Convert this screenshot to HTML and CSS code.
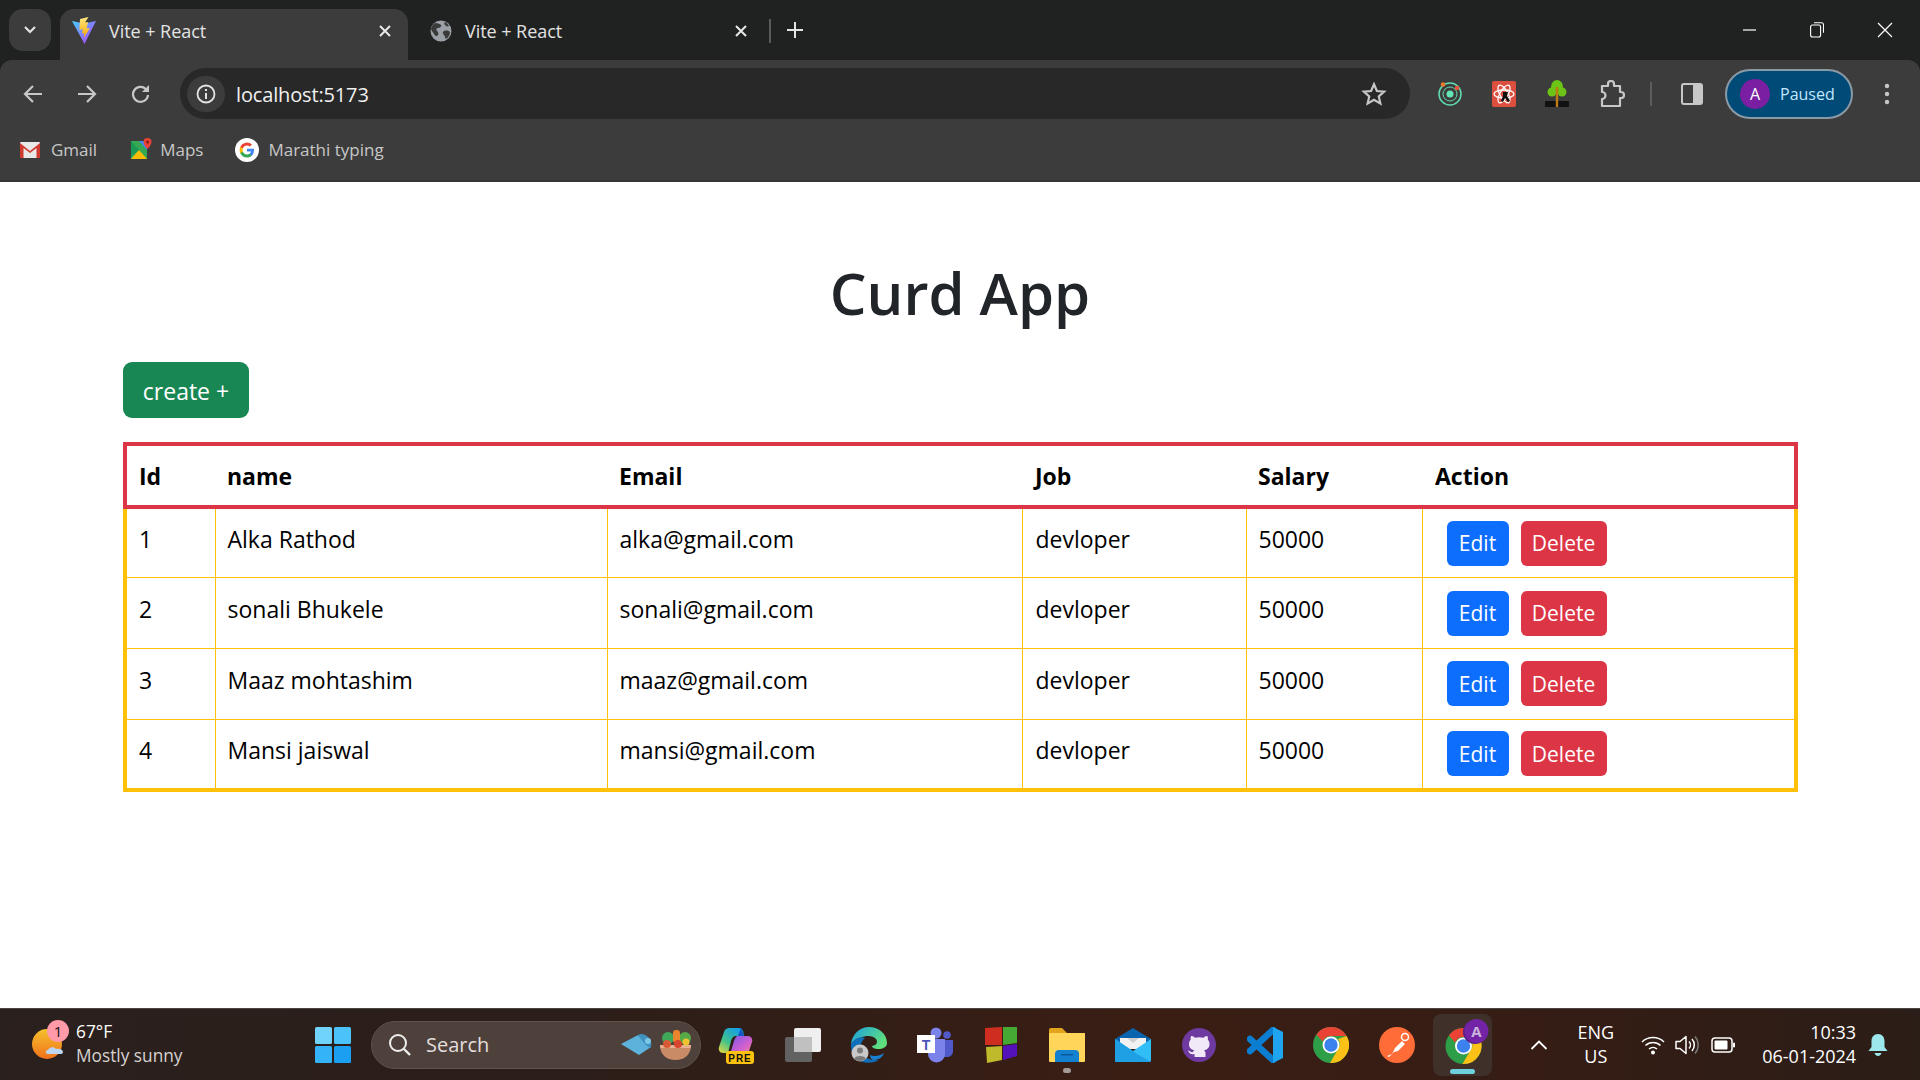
FILE: index.html
```html
<!DOCTYPE html>
<html lang="en">
<head>
<meta charset="utf-8">
<title>Vite + React</title>
<link rel="stylesheet" href="styles.css">
</head>
<body>
<header class="browser">
  <div class="tabstrip">
    <div class="tabsearch"><svg width="14" height="10" viewBox="0 0 14 10"><path d="M2 2l5 5 5-5" fill="none" stroke="#e3e3e3" stroke-width="2.2"/></svg></div>
    <div class="tab active">
      <svg class="favicon" width="24" height="28" viewBox="0 0 24 28"><defs><linearGradient id="vp" x1="0" y1="0" x2="1" y2="1"><stop offset="0" stop-color="#41d1ff"/><stop offset="1" stop-color="#bd34fe"/></linearGradient><linearGradient id="vy" x1="0" y1="0" x2="0" y2="1"><stop offset="0" stop-color="#ffea83"/><stop offset="1" stop-color="#ffa800"/></linearGradient></defs><path d="M0 4l12 2.500L24 4 12.500 27z" fill="url(#vp)"/><path d="M16.500 0L8 2l-.6 11 3.400-.8-.8 4.300 2.400-.6-.7 5L18 11l-3.400.6L16 5l-3 .6z" fill="url(#vy)"/></svg>
      <span class="tabtitle">Vite + React</span>
      <svg class="tabx" width="14" height="14" viewBox="0 0 14 14"><path d="M2 2l10 10M12 2L2 12" stroke="#e8e8e8" stroke-width="2"/></svg>
    </div>
    <div class="tab">
      <svg class="favicon" width="22" height="22" viewBox="0 0 22 22"><circle cx="11" cy="11" r="10.500" fill="#9aa0a6"/><path d="M5 3c3 0 5 1 6 2s-1 3-3 3-2 2-1 3 2 2 1 4-3 1-4-1-3-4-3-5 2-5 4-6zM14 11c3-1 5 0 6 1 0 3-2 6-4 7-1-1-1-3-2-4s-2-3 0-4zM15 2c2 1 3 2 4 4-2 1-3 0-4-1s-1-2 0-3z" fill="#3a3a3a"/></svg>
      <span class="tabtitle">Vite + React</span>
      <svg class="tabx" width="14" height="14" viewBox="0 0 14 14"><path d="M2 2l10 10M12 2L2 12" stroke="#e8e8e8" stroke-width="2"/></svg>
    </div>
    <span class="tabdivider"></span>
    <svg class="newtab" width="18" height="18" viewBox="0 0 18 18"><path d="M9 1v16M1 9h16" stroke="#e3e3e3" stroke-width="2"/></svg>
    <div class="winctrls">
      <svg width="14" height="14" viewBox="0 0 14 14"><path d="M0 7h13" stroke="#fff" stroke-width="1.200"/></svg>
      <svg width="14" height="16" viewBox="0 0 14 16"><rect x=".6" y="3" width="10" height="12" rx="2" fill="none" stroke="#fff" stroke-width="1.100"/><path d="M4 .8h7.500q2 0 2 2v8" fill="none" stroke="#fff" stroke-width="1.100"/></svg>
      <svg width="16" height="16" viewBox="0 0 16 16"><path d="M1 1l14 14M15 1L1 15" stroke="#fff" stroke-width="1.200"/></svg>
    </div>
  </div>
  <div class="toolbar">
    <div class="navs">
      <svg width="22" height="20" viewBox="0 0 22 20"><path d="M20 10H3M11 2l-8 8 8 8" fill="none" stroke="#c7c7c7" stroke-width="2.200"/></svg>
      <svg width="22" height="20" viewBox="0 0 22 20"><path d="M2 10h17M11 2l8 8-8 8" fill="none" stroke="#c7c7c7" stroke-width="2.200"/></svg>
      <svg class="reload" width="20" height="20" viewBox="0 0 20 20"><path d="M17 11a7.500 7.500 0 1 1-2.200-6" fill="none" stroke="#c7c7c7" stroke-width="2.200"/><path d="M18 1v7h-7z" fill="#c7c7c7"/></svg>
    </div>
    <div class="omnibox">
      <span class="siteinfo"><svg width="20" height="20" viewBox="0 0 20 20"><circle cx="10" cy="10" r="8.500" fill="none" stroke="#e3e3e3" stroke-width="1.800"/><path d="M10 9v6M10 5v2" stroke="#e3e3e3" stroke-width="2"/></svg></span>
      <span class="url">localhost:5173</span>
      <svg class="star" width="26" height="26" viewBox="0 0 24 24"><path d="M12 3l2.700 6.200 6.700.6-5 4.500 1.500 6.600L12 17.400l-5.900 3.500 1.500-6.600-5-4.500 6.700-.6z" fill="none" stroke="#c7c7c7" stroke-width="2"/></svg>
    </div>
    <div class="exts">
      <svg width="26" height="26" viewBox="0 0 26 26"><circle cx="13" cy="13" r="11" fill="none" stroke="#5fdcae" stroke-width="1.500"/><circle cx="13" cy="13" r="7" fill="none" stroke="#5fdcae" stroke-width="1"/><circle cx="13" cy="13" r="3.500" fill="#62e6b4"/><circle cx="6" cy="3.500" r="2.300" fill="#e8792f"/><circle cx="20" cy="7" r="2.300" fill="#e5533a"/></svg>
      <svg width="24" height="26" viewBox="0 0 24 26"><rect width="24" height="26" rx="2" fill="#dc4f3e"/><g fill="none" stroke="#fff" stroke-width="1.300"><ellipse cx="12" cy="13" rx="10" ry="4"/><ellipse cx="12" cy="13" rx="10" ry="4" transform="rotate(60 12 13)"/><ellipse cx="12" cy="13" rx="10" ry="4" transform="rotate(120 12 13)"/></g><path d="M11 11h5l-1 4 3 5-2 1-3-4-2 4-2-1 2-5z" fill="#111"/></svg>
      <svg width="24" height="30" viewBox="0 0 24 30"><ellipse cx="12" cy="8" rx="6" ry="7" fill="#6cc516"/><circle cx="7" cy="13" r="4.500" fill="#6cc516"/><circle cx="17" cy="13" r="4.500" fill="#6cc516"/><rect x="10.800" y="8" width="2.400" height="18" fill="#c07b12"/><rect y="22" width="24" height="6" fill="#111"/><rect x="10.800" y="22" width="2.400" height="6" fill="#c07b12"/></svg>
      <svg class="puzzle" width="26" height="28" viewBox="0 0 26 28"><path d="M3 6h6V4a3 3 0 0 1 6 0v2h6v6h1a3 3 0 0 1 0 6h-1v8H3v-7a3 3 0 0 0 0-7z" fill="none" stroke="#c7c7c7" stroke-width="2.200" stroke-linejoin="round"/></svg>
    </div>
    <span class="tooldivider"></span>
    <svg class="sidepanel" width="22" height="22" viewBox="0 0 22 22"><rect x="1" y="1" width="20" height="20" rx="2" fill="none" stroke="#c7c7c7" stroke-width="2"/><rect x="12" y="1" width="9" height="20" rx="1" fill="#c7c7c7"/></svg>
    <div class="profile"><span class="avatar">A</span><span class="paused">Paused</span></div>
    <svg class="kebab" width="6" height="22" viewBox="0 0 6 22"><circle cx="3" cy="3" r="2.200" fill="#c7c7c7"/><circle cx="3" cy="11" r="2.200" fill="#c7c7c7"/><circle cx="3" cy="19" r="2.200" fill="#c7c7c7"/></svg>
  </div>
  <div class="bookmarks">
    <span class="bm bm-gmail"><svg width="22" height="18" viewBox="0 0 22 18"><rect x="1" y="1" width="20" height="16" rx="1" fill="#e8e8e8"/><path d="M1 17V2l10 8 10-8v15h-3.500V7L11 12 4.500 7v10z" fill="#d0392e"/></svg>Gmail</span>
    <span class="bm bm-maps"><svg width="22" height="24" viewBox="0 0 22 24"><path d="M1 3h16v18H1z" fill="#34a853"/><path d="M1 21l8-9 8 9z" fill="#fbbc04"/><path d="M9 3h8v9z" fill="#4285f4"/><path d="M1 3l8 9-8 6z" fill="#1a9a55"/><path d="M17.500 0a4 4 0 0 1 4 4c0 3-4 7-4 7s-4-4-4-7a4 4 0 0 1 4-4z" fill="#ea4335"/><circle cx="17.500" cy="4" r="1.500" fill="#7d1d16"/></svg>Maps</span>
    <span class="bm bm-g"><svg width="24" height="24" viewBox="0 0 24 24"><circle cx="12" cy="12" r="12" fill="#fff"/><path d="M19 12.300c0-.6 0-1-.1-1.500H12v2.800h4a3.400 3.400 0 0 1-1.500 2.200v1.900h2.400c1.400-1.300 2.100-3.200 2.100-5.400z" fill="#4285f4"/><path d="M12 19.500c2 0 3.700-.7 4.900-1.800l-2.400-1.900c-.7.500-1.500.7-2.500.7-1.900 0-3.600-1.300-4.200-3.100H5.300v1.900a7.500 7.500 0 0 0 6.700 4.200z" fill="#34a853"/><path d="M7.800 13.400a4.500 4.500 0 0 1 0-2.800V8.700H5.300a7.500 7.500 0 0 0 0 6.600z" fill="#fbbc05"/><path d="M12 7.500c1.100 0 2.100.4 2.900 1.100L17 6.500A7.500 7.500 0 0 0 5.300 8.700l2.500 1.900C8.400 8.800 10.100 7.500 12 7.500z" fill="#ea4335"/></svg>Marathi typing</span>
  </div>
</header>

<main class="page">
  <h1 class="title">Curd App</h1>
  <div class="create-row"><button class="btn btn-create">create +</button></div>
  <table class="crud">
    <colgroup><col class="c-id"><col class="c-name"><col class="c-email"><col class="c-job"><col class="c-salary"><col class="c-action"></colgroup>
    <thead><tr><th>Id</th><th>name</th><th>Email</th><th>Job</th><th>Salary</th><th>Action</th></tr></thead>
    <tbody>
      <tr><td>1</td><td>Alka Rathod</td><td>alka@gmail.com</td><td>devloper</td><td>50000</td><td class="actions"><button class="btn btn-edit">Edit</button><button class="btn btn-delete">Delete</button></td></tr>
      <tr><td>2</td><td>sonali Bhukele</td><td>sonali@gmail.com</td><td>devloper</td><td>50000</td><td class="actions"><button class="btn btn-edit">Edit</button><button class="btn btn-delete">Delete</button></td></tr>
      <tr><td>3</td><td>Maaz mohtashim</td><td>maaz@gmail.com</td><td>devloper</td><td>50000</td><td class="actions"><button class="btn btn-edit">Edit</button><button class="btn btn-delete">Delete</button></td></tr>
      <tr><td>4</td><td>Mansi jaiswal</td><td>mansi@gmail.com</td><td>devloper</td><td>50000</td><td class="actions"><button class="btn btn-edit">Edit</button><button class="btn btn-delete">Delete</button></td></tr>
    </tbody>
  </table>
</main>

<footer class="taskbar">
  <div class="weather">
    <span class="wicon"><svg width="38" height="40" viewBox="0 0 38 40"><defs><linearGradient id="sun" x1="0" y1="0" x2="0" y2="1"><stop offset="0" stop-color="#f5c22e"/><stop offset="1" stop-color="#f0701a"/></linearGradient></defs><circle cx="18" cy="19" r="15" fill="url(#sun)"/><path d="M19 29c-3 0-3-4 0-4 1-3 6-4 8-1 4-1 7 1 7 3s-2 2-3 2z" fill="#bcd6f2"/></svg><span class="wbadge">1</span></span>
    <span class="wtext"><span class="wtemp">67°F</span><span class="wdesc">Mostly sunny</span></span>
  </div>
  <svg class="winlogo" width="36" height="36" viewBox="0 0 36 36"><rect width="17" height="17" rx="1.500" fill="#6fd3fb"/><rect x="19" width="17" height="17" rx="1.500" fill="#4cc2fa"/><rect y="19" width="17" height="17" rx="1.500" fill="#35b3f8"/><rect x="19" y="19" width="17" height="17" rx="1.500" fill="#1b9ff0"/></svg>
  <div class="search">
    <svg width="24" height="24" viewBox="0 0 24 24"><circle cx="10" cy="10" r="8" fill="none" stroke="#efefef" stroke-width="2"/><path d="M16 16l6 6" stroke="#efefef" stroke-width="2.400"/></svg>
    <span class="searchtext">Search</span>
    <svg class="searchart" width="72" height="32" viewBox="0 0 72 32"><path d="M0 15l17-9 13 12-12 8z" fill="#5db2dc"/><path d="M17 6c3-2 7-1 10 2 3 3 4 6 3 10-1 1-3 0-5-2-3-3-6-7-8-10z" fill="#3f92bf"/><circle cx="27" cy="12" r="3" fill="#7cc7e6"/><path d="M39 16h31c0 9-6 15-15.500 15S39 25 39 16z" fill="#c98a66"/><path d="M39 16h31l-.5 3h-30z" fill="#e9b08f"/><circle cx="47" cy="9" r="6" fill="#3fa65a"/><circle cx="64" cy="9" r="6" fill="#58a947"/><rect x="52" y="1" width="7" height="13" rx="3" fill="#e8852d"/><circle cx="46" cy="15" r="4" fill="#d85a35"/><circle cx="57" cy="15" r="4" fill="#d8452f"/><circle cx="65" cy="13" r="3.500" fill="#f2c230"/></svg>
  </div>
  <div class="tray-apps">
    <span class="app"><svg width="38" height="40" viewBox="0 0 38 40"><defs><linearGradient id="cp1" x1="0" y1="1" x2=".7" y2="0"><stop offset="0" stop-color="#f0d83c"/><stop offset=".45" stop-color="#41c28b"/><stop offset="1" stop-color="#159fe6"/></linearGradient><linearGradient id="cp2" x1="0" y1="0" x2="1" y2="1"><stop offset="0" stop-color="#7c5be6"/><stop offset=".6" stop-color="#d25fd0"/><stop offset="1" stop-color="#f08a8a"/></linearGradient></defs><path d="M11 3h10c2 0 3 1 4 3l1 5h-8c-3 0-4 2-5 5l-3 12H5c-3 0-5-3-4-6l5-15c1-3 3-4 5-4z" fill="url(#cp1)"/><path d="M20 11h10c3 0 5 3 4 6l-3 9c-1 2-2 3-4 3H17c-2 0-4-1-4-3l3-10c1-3 2-5 4-5z" fill="url(#cp2)"/><path d="M23 3l3 8h-6z" fill="#1257c4"/><rect x="8" y="26" width="28" height="13" rx="3" fill="#ffc20e"/><text x="22" y="36.500" class="pre">PRE</text></svg></span>
    <span class="app"><svg width="36" height="34" viewBox="0 0 36 34"><rect x="9" y="0" width="27" height="24" rx="2" fill="#efefef"/><rect y="9" width="27" height="25" rx="2" fill="#626262"/><rect x="9" y="9" width="18" height="15" fill="#c0c0c0"/></svg></span>
    <span class="app"><svg width="36" height="36" viewBox="0 0 36 36"><defs><linearGradient id="eg" x1="0" y1="0" x2="1" y2=".5"><stop offset="0" stop-color="#1b9de2"/><stop offset="1" stop-color="#5fe07d"/></linearGradient></defs><path d="M18 0c10 0 18 7 18 16 0 4-4 6-9 6-3 0-6-1-6-3 5-1 6-4 4-7-4-5-16-4-25 5C1 7 9 0 18 0z" fill="url(#eg)"/><path d="M0 17c3-5 9-8 14-6-4 3-6 9-3 15 2 5 9 8 17 7-10 6-29 3-28-16z" fill="#0f6fbb"/><path d="M19 28c4 2 10 1 14-2-2 5-6 7-10 7-2 0-4-2-4-5z" fill="#1a7fd0"/><circle cx="9" cy="26" r="8.500" fill="#c8c8c8"/><circle cx="9" cy="23.500" r="3" fill="#7a7a7a"/><path d="M3 32c1-4 11-4 12 0-3 2.500-9 2.500-12 0z" fill="#7a7a7a"/></svg></span>
    <span class="app"><svg width="36" height="36" viewBox="0 0 36 36"><circle cx="19" cy="6" r="5.500" fill="#7b83eb"/><circle cx="30" cy="8" r="3.800" fill="#5059c9"/><path d="M26 13h10v11c0 4-3 6-6 6h-4z" fill="#5059c9"/><path d="M11 12h17v15a8.500 8.500 0 0 1-17 0z" fill="#7b83eb"/><rect y="8" width="18" height="18" fill="#fff"/><text x="9" y="23" class="teamsT">T</text></svg></span>
    <span class="app"><svg width="34" height="36" viewBox="0 0 34 36"><path d="M1 1l17-1v18H1z" fill="#cf2d20"/><path d="M19 0l14 0v16l-14 2z" fill="#46a934"/><path d="M2 20l16-1v14L3 36z" fill="#bfb92c"/><path d="M19 19l14-2v12l-14 4z" fill="#5412ba"/></svg></span>
    <span class="app app-files"><svg width="36" height="34" viewBox="0 0 36 34"><path d="M0 2q0-2 2-2h11l5 5h18v6H0z" fill="#e3a31a"/><rect y="5" width="36" height="29" rx="1" fill="#ffd55a"/><path d="M6 34v-8q0-4 4-4h16q4 0 4 4v8z" fill="#1380d0"/><rect x="12" y="26" width="12" height="1.500" fill="#0a5b9b"/></svg><span class="dot"></span></span>
    <span class="app"><svg width="36" height="34" viewBox="0 0 36 34"><path d="M0 11L18 0l18 11v5H0z" fill="#0a63ad"/><path d="M5 10h26v11H5z" fill="#f2f2f2"/><path d="M12 10h12l-6 5z" fill="#cfcfcf"/><path d="M0 11l18 12 18-12v21q0 2-2 2H2q-2 0-2-2z" fill="#31bdf5"/><path d="M0 34V11l22 15 14 8z" fill="#1f9fe4"/></svg></span>
    <span class="app"><svg width="34" height="34" viewBox="0 0 34 34"><circle cx="17" cy="17" r="17" fill="#6f3a9f"/><path d="M12.500 29v-3c-4.500 1-5.500-1.500-6.500-3.500 1.500 0 2.500 1.700 4.500 1.800.4-.8 1-1.400 2-2-4-.8-5.500-3-5.500-6.300 0-2 .7-3.200 1.700-4.300-.3-1.300 0-2.800.5-3.700 2 0 3 1 3.800 1.800 2.700-.7 5.800-.7 8.500 0 .8-.8 1.800-1.800 3.800-1.800.5 .9.8 2.400.5 3.700 1 1.100 1.700 2.300 1.700 4.300 0 3.300-1.500 5.500-5.500 6.300 1 .8 1.500 2 1.500 3.200V29z" fill="#f1e9f7"/></svg></span>
    <span class="app"><svg width="36" height="36" viewBox="0 0 36 36"><path d="M26 3L3 24M26 33L3 12" stroke="#0c7ed1" stroke-width="6.500" stroke-linecap="round" fill="none"/><path d="M26 0l10 5v26l-10 5z" fill="#1fa4f0"/></svg></span>
    <span class="app"><svg width="36" height="36" viewBox="0 0 36 36"><circle cx="18" cy="18" r="18" fill="#2f9e48"/><path d="M18 0a18 18 0 0 1 15.600 9H18a9 9 0 0 0-8.300 5.500L3.400 7.400A18 18 0 0 1 18 0z" fill="#ea4335"/><path d="M33.600 9A18 18 0 0 1 17 36l7.500-13A9 9 0 0 0 25 12z" fill="#fbc116"/><circle cx="18" cy="18" r="8.500" fill="#fff"/><circle cx="18" cy="18" r="6.700" fill="#3b82ee"/></svg></span>
    <span class="app"><svg width="36" height="36" viewBox="0 0 36 36"><circle cx="18" cy="18" r="18" fill="#ff6c37"/><path d="M8 29l5-2 3-6 7-7 3 3-7 7-4 1-5 5z" fill="#fff"/><circle cx="26" cy="10" r="3.500" fill="none" stroke="#fff" stroke-width="1.500"/></svg></span>
    <span class="app app-active"><svg class="chromeA" width="48" height="46" viewBox="0 0 48 46"><g transform="translate(6.500 6)"><circle cx="18" cy="18" r="18" fill="#2f9e48"/><path d="M18 0a18 18 0 0 1 15.600 9H18a9 9 0 0 0-8.300 5.500L3.400 7.400A18 18 0 0 1 18 0z" fill="#ea4335"/><path d="M33.600 9A18 18 0 0 1 17 36l7.500-13A9 9 0 0 0 25 12z" fill="#fbc116"/><circle cx="18" cy="18" r="8.500" fill="#fff"/><circle cx="18" cy="18" r="6.700" fill="#3b82ee"/></g><circle cx="36" cy="10" r="12" fill="#5a1f86"/><circle cx="37.500" cy="9" r="12" fill="#7323a6"/><text x="37.500" y="14.500" class="avA">A</text></svg><span class="running"></span></span>
  </div>
  <div class="tray">
    <svg class="caret" width="18" height="12" viewBox="0 0 18 12"><path d="M1.500 10L9 2.500 16.500 10" fill="none" stroke="#fff" stroke-width="1.800"/></svg>
    <span class="lang"><span>ENG</span><span>US</span></span>
    <svg width="24" height="20" viewBox="0 0 24 20"><g fill="none" stroke="#fff" stroke-width="1.500"><path d="M1 7a16 16 0 0 1 22 0"/><path d="M4.500 10.500a11 11 0 0 1 15 0"/><path d="M8 14a6 6 0 0 1 8 0"/></g><circle cx="12" cy="17.500" r="2" fill="#fff"/></svg>
    <svg class="volume" width="24" height="22" viewBox="0 0 24 22"><path d="M1 7.500h4L11 2.500v17l-6-5H1z" fill="none" stroke="#fff" stroke-width="1.500" stroke-linejoin="round"/><path d="M14 7.500a5 5 0 0 1 0 7M17 5a9 9 0 0 1 0 12" fill="none" stroke="#fff" stroke-width="1.500"/><path d="M20 2.500a13 13 0 0 1 0 17" fill="none" stroke="#777" stroke-width="1.500"/></svg>
    <svg class="battery" width="24" height="16" viewBox="0 0 24 16"><rect x="1" y="1" width="20" height="14" rx="3" fill="none" stroke="#fff" stroke-width="1.500"/><rect x="3.500" y="3.500" width="13" height="9" rx="1" fill="#fff"/><rect x="22" y="5.500" width="2" height="5" rx="1" fill="#fff"/></svg>
    <span class="clock"><span>10:33</span><span>06-01-2024</span></span>
    <svg class="bell" width="20" height="24" viewBox="0 0 20 24"><path d="M10 1c4 0 6.500 3 6.500 7v6l3 4H.5l3-4V8c0-4 2.500-7 6.500-7z" fill="#9be7ec"/><path d="M6.500 20h7c-.5 2-2 3-3.500 3s-3-1-3.500-3z" fill="#9be7ec"/></svg>
  </div>
</footer>
</body>
</html>
```

FILE: styles.css
```css
* { box-sizing: border-box; }
html, body { margin: 0; height: 100%; }
body { display: flex; flex-direction: column; height: 1080px; overflow: hidden; background: #fff; font-family: "Open Sans", "Noto Sans", sans-serif; }
svg { display: block; flex: none; }

.browser { background: #202221; color: #e3e3e3; height: 182px; flex: none; }
.tabstrip { display: flex; align-items: flex-end; height: 60px; padding-left: 9px; }
.tabsearch { width: 42px; height: 42px; margin-bottom: 9px; border-radius: 14px; background: #3c3c3c; display: flex; align-items: center; justify-content: center; }
.tab { width: 348px; height: 51px; margin-left: 9px; padding: 0 16px 8px 12px; display: flex; align-items: center; border-radius: 14px 14px 0 0; }
.tab.active { background: #3c3c3c; }
.tab .favicon { margin-right: 13px; }
.tab + .tab { margin-left: 0; width: 356px; padding: 0 16px 8px 22px; }
.tabtitle { flex: 1; font-size: 18px; color: #e3e3e3; letter-spacing: -.05px; }
.tabdivider { width: 2px; height: 24px; background: #5a5a5a; margin: 0 0 17px 5px; }
.newtab { margin: 0 0 21px 15px; }
.winctrls { margin-left: auto; display: flex; align-items: center; gap: 53px; padding-right: 27px; height: 60px; align-self: flex-start; }

.toolbar { display: flex; align-items: center; height: 67px; background: #3c3c3c; border-radius: 12px 12px 0 0; padding-left: 22px; }
.navs { display: flex; align-items: center; gap: 32px; width: 158px; }
.reload { margin-left: 1px; }
.omnibox { width: 1230px; height: 51px; border-radius: 26px; background: #282828; display: flex; align-items: center; padding: 0 23px 0 7px; }
.siteinfo { width: 38px; height: 36px; border-radius: 18px; background: #3c3c3c; display: flex; align-items: center; justify-content: center; }
.url { flex: 1; font-size: 20px; line-height: 27px; margin: 2px 0 0 11px; color: #f1f1f1; letter-spacing: -.15px; }
.exts { display: flex; align-items: center; gap: 29px; margin-left: 27px; }
.puzzle { margin-left: 1px; }
.tooldivider { width: 2px; height: 24px; background: #5c5c5c; margin-left: 25px; }
.sidepanel { margin-left: 29px; }
.profile { margin-left: 22px; width: 128px; height: 50px; border-radius: 25px; background: #004a77; border: 2px solid #8a9aa5; display: flex; align-items: center; padding-left: 13px; }
.avatar { width: 30px; height: 30px; border-radius: 50%; background: #7a1fa2; display: flex; align-items: center; justify-content: center; font-size: 16px; color: #fff; }
.paused { font-size: 16px; margin-left: 10px; color: #c2e7ff; }
.kebab { margin-left: 31px; }

.bookmarks { display: flex; align-items: center; height: 55px; background: #3c3c3c; padding: 0 0 8px 19px; font-size: 17px; color: #c7c7c7; border-bottom: 2px solid #353535; }
.bm { display: flex; align-items: center; gap: 10px; margin-right: 33px; }
.bm-maps { gap: 8px; margin-right: 32px; }
.bm-g { gap: 9px; }

.page { flex: 1; padding: 0 123px; color: #212529; }
.title { margin: 76px 0 0; text-align: center; font-size: 58px; font-weight: 600; line-height: 1.2; height: 67px; }
.create-row { margin-top: 37px; }
.btn { border: 0; border-radius: 6px; color: #fff; font-family: inherit; cursor: pointer; }
.btn-create { width: 126px; height: 56px; border-radius: 9px; background: #198754; font-size: 23px; padding-top: 2px; }
.crud { margin-top: 24px; width: 1671px; table-layout: fixed; border-collapse: collapse; border: 4px solid #ffc107; font-size: 23px; color: #000; }
.c-id { width: 90px; } .c-name { width: 392px; } .c-email { width: 415px; } .c-job { width: 224px; } .c-salary { width: 176px; } .c-action { width: 374px; }
.crud thead tr { border: 4px solid #dc3545; height: 63px; }
.crud th { text-align: left; font-weight: 700; padding: 0 12px; }
.crud th:nth-child(4), .crud th:nth-child(6) { padding-left: 13px; }
.crud td { height: 70.700px; border-left: 1px solid #ffc107; border-bottom: 1px solid #ffc107; padding: 0 12px 8px; vertical-align: middle; }
.crud td:first-child { border-left: 0; }
.crud td:nth-child(4) { padding-left: 13px; }
.crud td.actions { padding: 0 0 0 24px; }
.btn-edit, .btn-delete { height: 45px; font-size: 21px; }
.btn-edit { width: 62px; background: #0d6efd; margin-right: 12px; }
.btn-delete { width: 86px; background: #dc3545; }

.taskbar { height: 72px; flex: none; display: flex; align-items: center; background: linear-gradient(90deg, #2a201d 0%, #2c1e19 30%, #3a1e14 60%, #351d15 80%, #2b1d17 100%); border-top: 1px solid #4a4542; color: #fff; }
.weather { display: flex; align-items: center; width: 315px; padding-left: 29px; }
.wicon { position: relative; width: 47px; }
.wbadge { position: absolute; left: 18px; top: -5px; width: 22px; height: 22px; border-radius: 50%; background: #ff9aa8; color: #111; font-size: 15px; display: flex; align-items: center; justify-content: center; }
.wtext { display: flex; flex-direction: column; font-size: 17.300px; line-height: 24px; margin-top: -2px; }
.wdesc { color: #d6d2d0; }
.winlogo { margin-right: 20px; }
.search { width: 330px; height: 48px; border-radius: 24px; background: #4e403b; border: 1px solid #5f524d; display: flex; align-items: center; padding: 0 7px 0 16px; }
.searchtext { flex: 1; margin-left: 14px; font-size: 20px; color: #e2dfdd; }
.tray-apps { display: flex; align-items: center; margin-left: 3px; }
.app { width: 66px; height: 60px; display: flex; align-items: center; justify-content: center; position: relative; }
.app-active { width: 59px; height: 62px; margin: 0 3px; background: #40302a; border-radius: 8px; }
.chromeA { overflow: visible; }
.running { position: absolute; left: 17px; right: 17px; bottom: 2px; height: 5px; border-radius: 3px; background: #6fd0dd; }
.dot { position: absolute; left: 29px; bottom: 2px; width: 8px; height: 5px; border-radius: 3px; background: #a59a96; }
.pre { font: 700 10px "Liberation Sans", sans-serif; fill: #111; text-anchor: middle; letter-spacing: 1px; }
.teamsT { font: 700 14px "Liberation Sans", sans-serif; fill: #4b53bc; text-anchor: middle; }
.avA { font: 700 15px "Open Sans", sans-serif; fill: #c9b3dc; text-anchor: middle; }
.tray { display: flex; align-items: center; margin-left: 34.500px; }
.caret { margin-right: 30px; }
.lang { display: flex; flex-direction: column; align-items: center; font-size: 18px; line-height: 24px; margin-right: 27px; margin-top: -2px; }
.volume { margin-left: 10px; }
.battery { margin-left: 12px; }
.clock { display: flex; flex-direction: column; align-items: flex-end; font-size: 18px; line-height: 24px; margin-left: 11px; width: 110px; margin-top: -2px; }
.bell { margin-left: 12px; }
```
